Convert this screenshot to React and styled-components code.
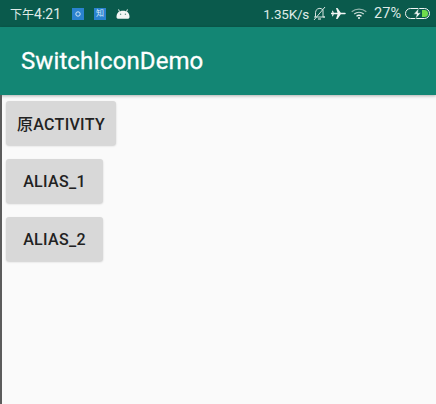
import React from "react";
import styled, { createGlobalStyle } from "styled-components";

const GlobalStyle = createGlobalStyle`
  html, body {
    margin: 0;
    padding: 0;
    background: #fafafa;
  }
`;

export default function App() {
  return (
    <Phone>
      <GlobalStyle />
      <StatusBar>
        <StatusGroup>
          <Clock>
            <ClockPrefix>下午</ClockPrefix>4:21
          </Clock>
          <AppBadge $ml={11}>
            <svg width="8" height="8" viewBox="0 0 8 8">
              <circle cx="4" cy="4" r="2.2" fill="none" stroke="#cfe6f7" strokeWidth="1" />
            </svg>
          </AppBadge>
          <AppBadge $ml={10}>
            <BadgeText>知</BadgeText>
          </AppBadge>
          <Robot width="14" height="10" viewBox="0 0 14 10">
            <path d="M.5 8C.5 3.800 3 1.800 7 1.800s6.500 2 6.500 6.200c0 1.200-.8 1.800-2 1.800h-9c-1.200 0-2-.6-2-1.800Z" fill="#f2f5f4" />
            <path d="M3.400 2.600 2.600.4M10.600 2.600 11.400.4" stroke="#f2f5f4" strokeWidth="1" />
            <circle cx="4.600" cy="5.200" r=".7" fill="#5f9388" />
            <circle cx="9.400" cy="5.200" r=".7" fill="#5f9388" />
          </Robot>
        </StatusGroup>
        <StatusGroup>
          <Speed>1.35K/s</Speed>
          <Bell width="13" height="15" viewBox="0 0 13 15">
            <path d="M2.500 11V6.500a4.200 4.200 0 0 1 6.600-3.400L10 3.800V11h2H1" fill="none" stroke="#d5e3df" strokeWidth="1" />
            <path d="M12 1 1 14" stroke="#d5e3df" strokeWidth="1" />
            <path d="M5 13h3" stroke="#d5e3df" strokeWidth="1.200" />
          </Bell>
          <PlaneIcon width="15" height="11" viewBox="0 0 15 11">
            <path d="M0 4.800h6.500L5 0h1.500l3.300 4.800h3.700c.8 0 1.300.3 1.300.7s-.5.7-1.300.7H9.800L6.500 11H5l1.500-4.800H0Z" fill="#f2f5f4" />
            <path d="M1 2.800h1l1 2.700-1 2.700H1l.5-2.700Z" fill="#f2f5f4" />
          </PlaneIcon>
          <Wifi width="16" height="11" viewBox="0 0 16 11">
            <path d="M.7 3.700C4.900.3 11.100.3 15.300 3.700" fill="none" stroke="#8fb3aa" strokeWidth="1.300" />
            <path d="M3.200 6c2.800-2.200 6.800-2.200 9.600 0" fill="none" stroke="#c9dad5" strokeWidth="1.300" />
            <path d="M5.500 8.200c1.500-1.100 3.500-1.100 5 0" fill="none" stroke="#f2f5f4" strokeWidth="1.300" />
            <circle cx="8" cy="10" r="1" fill="#f2f5f4" />
          </Wifi>
          <Percent>27%</Percent>
          <Battery width="25" height="11" viewBox="0 0 25 11">
            <rect x=".5" y=".5" width="24" height="10" rx="5" fill="none" stroke="#f2f5f4" strokeWidth="1" />
            <path d="M17 2h2.500a3.500 3.500 0 0 1 0 7H17Z" fill="#6fdc4c" />
            <path d="M14 0 8.500 6.200h3L10.500 11 16 4.800h-3Z" fill="#f2f5f4" stroke="#0a5a4c" strokeWidth=".6" />
          </Battery>
        </StatusGroup>
      </StatusBar>
      <AppBar>
        <Title>SwitchIconDemo</Title>
      </AppBar>
      <Content>
        <ActionButton>原ACTIVITY</ActionButton>
        <ActionButton>ALIAS_1</ActionButton>
        <ActionButton>ALIAS_2</ActionButton>
      </Content>
    </Phone>
  );
}

const Phone = styled.div`
  width: 436px;
  height: 404px;
  display: flex;
  flex-direction: column;
  overflow: hidden;
  background: #fafafa;
  font-family: Roboto, "Noto Sans CJK SC", sans-serif;
`;
const StatusBar = styled.div`
  height: 27px;
  flex: none;
  display: flex;
  align-items: center;
  justify-content: space-between;
  padding: 0 6px 0 10px;
  background: #0a5a4c;
  color: #dfeae7;
  font-size: 13.5px;
`;
const StatusGroup = styled.div`
  display: flex;
  align-items: center;
`;
const Clock = styled.span`
  font-size: 14px;
`;
const ClockPrefix = styled.span`
  font-size: 12px;
`;
const AppBadge = styled.span`
  width: 12px;
  height: 12px;
  margin-left: ${(props) => props.$ml}px;
  display: flex;
  align-items: center;
  justify-content: center;
  background: #2a82cf;
`;
const BadgeText = styled.span`
  font-size: 8px;
  line-height: 12px;
  color: #d8ebf8;
`;
const Robot = styled.svg`
  margin-left: 10px;
`;
const Speed = styled.span`
  margin-right: 4px;
  letter-spacing: -0.2px;
`;
const Bell = styled.svg``;
const PlaneIcon = styled.svg`
  margin-left: 5px;
`;
const Wifi = styled.svg`
  margin-left: 5px;
`;
const Percent = styled.span`
  margin-left: 7px;
  margin-right: 4px;
  font-size: 14.500px;
`;
const Battery = styled.svg``;
const AppBar = styled.div`
  height: 68px;
  flex: none;
  display: flex;
  align-items: center;
  padding-left: 21px;
  background: #138674;
  box-shadow: 0 1px 3px rgba(0, 0, 0, 0.3);
`;
const Title = styled.div`
  color: #fff;
  font-size: 24px;
  font-weight: 400;
  letter-spacing: 0.1px;
  -webkit-text-stroke: 0.3px #fff;
`;
const Content = styled.div`
  flex: 1;
  display: flex;
  flex-direction: column;
  align-items: flex-start;
  gap: 14px;
  padding: 6px 0 0 4px;
  border-left: 2px solid #5c5c5c;
`;
const ActionButton = styled.button`
  height: 44px;
  min-width: 97px;
  padding: 0 11px;
  border: none;
  border-radius: 3px;
  background: #d8d8d8;
  color: #222;
  font-family: inherit;
  font-size: 16px;
  font-weight: 500;
  letter-spacing: 0.3px;
  box-shadow: 0 1px 2px rgba(0, 0, 0, 0.18);
`;
